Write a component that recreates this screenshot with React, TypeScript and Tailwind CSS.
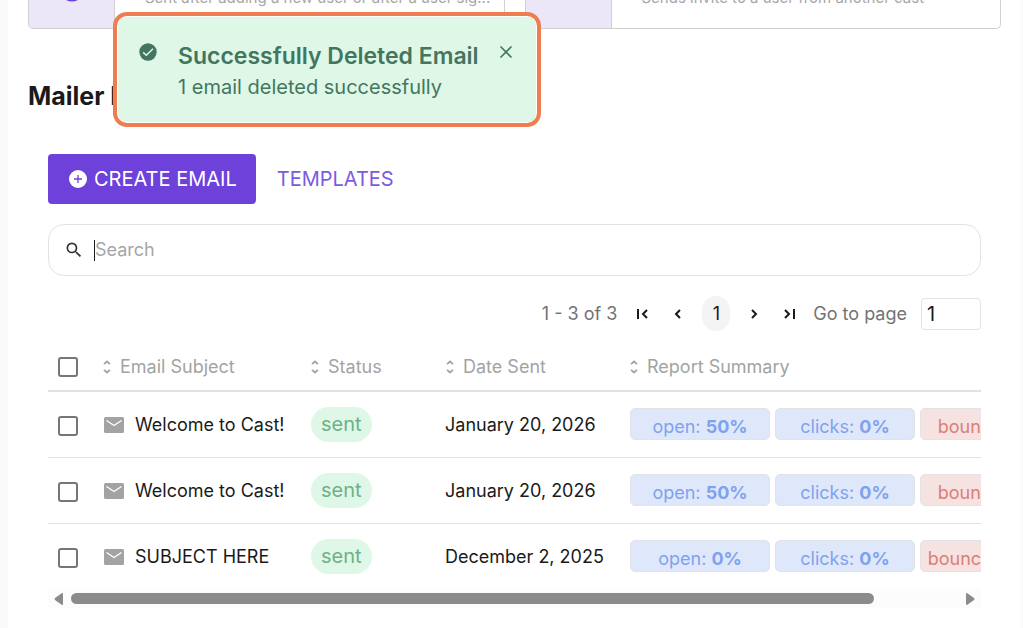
import React, { useRef, useState } from 'react';
import { MdSearch } from 'react-icons/md';

interface Email {
  id: number;
  subject: string;
  status: string;
  date: string;
  open: string;
  clicks: string;
  bounces: string;
}

const emails: Email[] = [
  { id: 1, subject: 'Welcome to Cast!', status: 'sent', date: 'January 20, 2026', open: '50%', clicks: '0%', bounces: '0%' },
  { id: 2, subject: 'Welcome to Cast!', status: 'sent', date: 'January 20, 2026', open: '50%', clicks: '0%', bounces: '0%' },
  { id: 3, subject: 'SUBJECT HERE', status: 'sent', date: 'December 2, 2025', open: '0%', clicks: '0%', bounces: '100%' },
];

const automations = ['Sent after adding a new user or after a user sig...', 'Sends invite to a user from another cast'];

const columns = ['Email Subject', 'Status', 'Date Sent', 'Report Summary'];

const pagerPaths = {
  first: 'M2 1v10M11 2 7 6l4 4',
  prev: 'M8 2 4 6l4 4',
  next: 'M4 2l4 4-4 4',
  last: 'M1 2l4 4-4 4M10 1v10',
};

function PagerButton({ kind, label }: { kind: keyof typeof pagerPaths; label: string }) {
  return (
    <button aria-label={label} className="flex h-8 w-4 items-center justify-center text-[#1a1a1a]">
      <svg width="12" height="12" viewBox="0 0 12 12" fill="none" stroke="currentColor" strokeWidth="2">
        <path d={pagerPaths[kind]} />
      </svg>
    </button>
  );
}

function Checkbox({ label }: { label: string }) {
  return (
    <input
      type="checkbox"
      aria-label={label}
      className="mt-[3px] block size-5 appearance-none rounded-[3px] border-2 border-[#767676] bg-white checked:bg-[#6d41da]"
    />
  );
}

function Stat({ children, tone }: { children: React.ReactNode; tone: 'blue' | 'red' }) {
  return (
    <div
      className={
        tone === 'blue'
          ? 'h-8 w-[140px] shrink-0 rounded-[5px] border border-[#e3e3e6] bg-[#dfe8fa] pt-1 text-center text-lg leading-7 text-[#7fa2ee]'
          : 'h-8 w-[140px] shrink-0 rounded-[5px] border border-[#e3e3e6] bg-[#f6e2e0] pt-1 text-center text-lg leading-7 text-[#da7f7a]'
      }
    >
      {children}
    </div>
  );
}

function Toast({ onClose }: { onClose: () => void }) {
  return (
    <div role="status" className="absolute left-[113px] top-3 rounded-[14px] border-4 border-[#ef7d52] bg-white p-px">
      <div className="flex h-[105px] w-[418px] items-start rounded-lg bg-[#dff7e7] pl-[21px] pt-[23px] text-[#437660]">
        <svg width="18" height="18" viewBox="0 0 18 18" className="mt-[3px] shrink-0">
          <circle cx="9" cy="9" r="8.7" fill="currentColor" />
          <path d="M4.2 9.4 7.3 12.3 14 5.8" fill="none" stroke="#dff7e7" strokeWidth="1.5" />
        </svg>
        <div className="ml-[21px] w-[321px]">
          <div className="text-[23px] font-semibold leading-8">Successfully Deleted Email</div>
          <div className="text-xl leading-[30px]">1 email deleted successfully</div>
        </div>
        <button aria-label="Close" onClick={onClose} className="mt-[5px]">
          <svg width="14" height="14" viewBox="0 0 14 14" fill="none" stroke="currentColor" strokeWidth="1.6">
            <path d="M1.5 1.5l11 11M12.5 1.5l-11 11" />
          </svg>
        </button>
      </div>
    </div>
  );
}

export default function App() {
  const [showToast, setShowToast] = useState(true);
  const [search, setSearch] = useState('');
  const scroller = useRef<HTMLDivElement>(null);

  const scrollTable = (by: number) => scroller.current?.scrollBy({ left: by });

  const visible = emails.filter(e => e.subject.toLowerCase().includes(search.toLowerCase()));

  return (
    <div className="relative min-h-screen bg-[#fafafa] pl-2 pr-0.5 font-[Inter,sans-serif] text-[#1a1a1a]">
      <main className="min-h-screen bg-white px-5">
        {/* Bottom of the automation cards, scrolled under the top edge */}
        <div className="grid h-[29px] grid-cols-2 gap-5 overflow-hidden">
          {automations.map((text, i) => (
            <div key={text} className="flex overflow-hidden rounded-b-[5px] border border-t-0 border-[#d0d0d0]">
              <div className="flex w-[86px] shrink-0 items-start justify-center border-r border-[#d0d0d0] bg-[#ebe7f9]">
                {i === 0 && (
                  <svg width="18" height="2" viewBox="0 0 18 2" className="text-[#6d41da]">
                    <path d="M3 0q6 3 12 0z" fill="currentColor" />
                  </svg>
                )}
              </div>
              <p className="flex h-2 items-end whitespace-nowrap pl-[30px] text-[15px] leading-5 text-[#a6a6a6]">{text}</p>
            </div>
          ))}
        </div>

        <h1 className="mt-[51px] text-[25px] font-bold leading-8">Mailer History</h1>

        <div className="mt-[42px] px-5">
          <div className="flex items-center">
            <button className="flex h-[50px] items-center gap-[7px] rounded bg-[#6d41da] pl-[21px] pr-[19px] text-xl text-white">
              <svg width="18" height="18" viewBox="0 0 18 18">
                <circle cx="9" cy="9" r="9" fill="currentColor" />
                <path d="M9 5v8M5 9h8" stroke="#6d41da" strokeWidth="1.3" />
              </svg>
              CREATE EMAIL
            </button>
            <a href="#templates" className="ml-[21px] text-xl text-[#7c5be0]">TEMPLATES</a>
          </div>

          <label className="mt-5 flex h-[52px] items-center rounded-2xl border border-[#e2e2e2] pl-[15px] pr-4">
            <MdSearch size={20} className="text-[#333]" />
            <span className="ml-2.5 h-[21px] w-px bg-[#1a1a1a]" />
            <input
              type="text"
              aria-label="Search"
              placeholder="Search"
              value={search}
              onChange={e => setSearch(e.target.value)}
              className="min-w-0 flex-1 text-lg outline-none placeholder:text-[#a6a6a6]"
            />
          </label>

          <div className="mt-5 flex h-[35px] items-center justify-end text-lg">
            <span className="mr-[17px] text-[#737373]">1 - 3 of 3</span>
            <PagerButton kind="first" label="First page" />
            <span className="w-5" />
            <PagerButton kind="prev" label="Previous page" />
            <button className="mx-4 h-[35px] w-7 rounded-full bg-[#f4f4f4]">1</button>
            <PagerButton kind="next" label="Next page" />
            <span className="w-5" />
            <PagerButton kind="last" label="Last page" />
            <label htmlFor="page" className="ml-[15px] mr-3.5 text-[#737373]">Go to page</label>
            <input id="page" type="text" defaultValue="1" className="h-8 w-[60px] rounded border border-[#e2e2e2] px-[5px] text-xl outline-none" />
          </div>

          <div ref={scroller} className="mt-2.5 overflow-hidden">
            <table className="w-full min-w-[1046px] table-fixed text-left">
              <colgroup>
                <col className="w-[54px]" />
                <col className="w-[208px]" />
                <col className="w-[135px]" />
                <col className="w-[184px]" />
                <col />
              </colgroup>
              <thead>
                <tr className="h-[50px] border-b-2 border-[#e2e2e2]">
                  <th className="pl-2.5"><Checkbox label="Select all" /></th>
                  {columns.map(name => (
                    <th key={name} className="pt-0.5 text-lg font-normal text-[#a3a3a3]">
                      <div className="flex items-center gap-2">
                        <svg width="10" height="14" viewBox="0 0 10 14" fill="none" stroke="currentColor" strokeWidth="1.8">
                          <path d="M2 4.2 5 1.5l3 2.7M2 9.8l3 2.7 3-2.7" />
                        </svg>
                        {name}
                      </div>
                    </th>
                  ))}
                </tr>
              </thead>
              <tbody>
                {visible.map(email => (
                  <tr key={email.id} className="h-[66px] border-b border-[#e2e2e2] last:border-0">
                    <td className="pl-2.5"><Checkbox label={`Select ${email.subject}`} /></td>
                    <td className="pt-0.5">
                      <div className="flex items-center gap-[11px] pl-0.5 text-lg">
                        <svg width="20" height="16" viewBox="0 0 20 16">
                          <rect width="20" height="16" rx="1.5" fill="#a3a3a3" />
                          <path d="M2.5 3.5 10 8.5l7.5-5" fill="none" stroke="white" strokeWidth="1.4" />
                        </svg>
                        {email.subject}
                      </div>
                    </td>
                    <td>
                      <span className="ml-px inline-flex h-[35px] items-center rounded-full bg-[#dff7e7] px-2.5 text-xl text-[#6db189]">
                        {email.status}
                      </span>
                    </td>
                    <td className="pt-0.5 text-lg">{email.date}</td>
                    <td>
                      <div className="flex gap-[5px] pl-px">
                        <Stat tone="blue">open: <b>{email.open}</b></Stat>
                        <Stat tone="blue">clicks: <b>{email.clicks}</b></Stat>
                        <Stat tone="red">bounce: <b>{email.bounces}</b></Stat>
                      </div>
                    </td>
                  </tr>
                ))}
              </tbody>
            </table>
          </div>

          <div className="flex h-[19px] items-center bg-[#fcfcfc] px-1.5 text-[#8b8b8b]">
            <button aria-label="Scroll left" onClick={() => scrollTable(-120)}>
              <svg width="9" height="12" viewBox="0 0 9 12"><path d="M8 0q1 0 1 1v10q0 1-1 1L1 7q-1-1 0-2z" fill="currentColor" /></svg>
            </button>
            <div className="mx-2 flex-1">
              <div className="h-[11px] w-[90.5%] rounded-full bg-[#8b8b8b]" />
            </div>
            <button aria-label="Scroll right" onClick={() => scrollTable(120)}>
              <svg width="9" height="12" viewBox="0 0 9 12"><path d="M1 0Q0 0 0 1v10q0 1 1 1l7-5q1-1 0-2z" fill="currentColor" /></svg>
            </button>
          </div>
        </div>
      </main>

      {showToast && <Toast onClose={() => setShowToast(false)} />}
    </div>
  );
}
